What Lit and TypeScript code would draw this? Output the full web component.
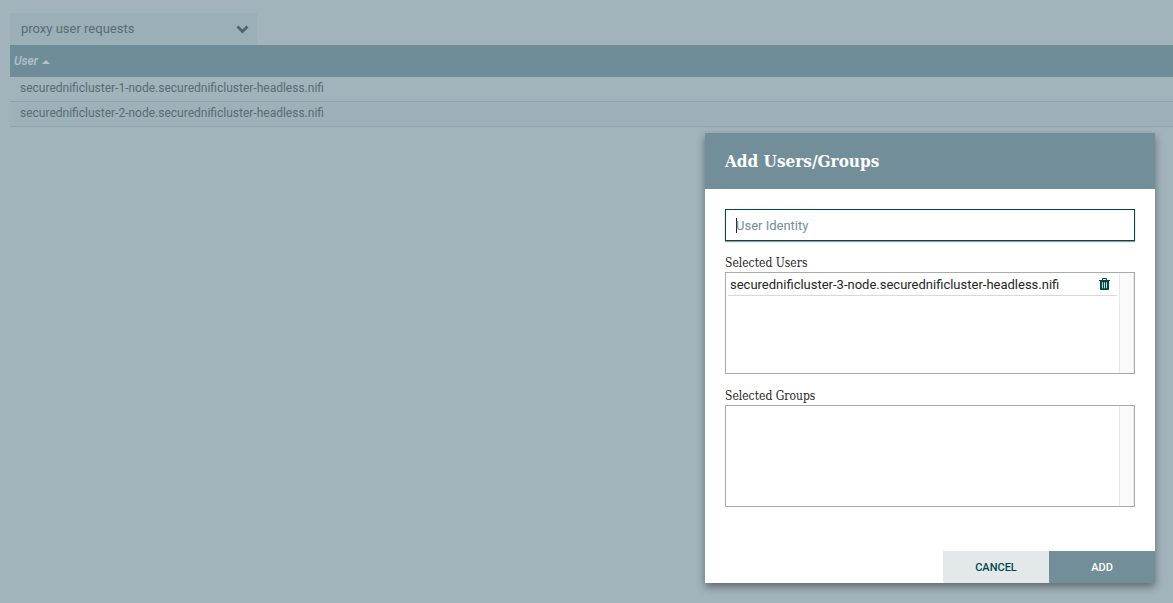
import { LitElement, html, css } from "lit";
import { customElement, state } from "lit/decorators.js";

@customElement("policy-users")
class PolicyUsers extends LitElement {
  static styles = css`
    :host {
      display: block;
      padding: 13px 0 0 10px;
      color: #586c74;
    }
    .picker {
      position: relative;
      width: 247px;
      height: 32px;
      background: #9bafb8;
    }
    .picker-select {
      appearance: none;
      width: 100%;
      height: 100%;
      margin: 0;
      padding: 0 32px 0 11px;
      border: 0;
      border-radius: 0;
      outline: none;
      background: transparent;
      color: inherit;
      font: 13px/32px Roboto, sans-serif;
    }
    .picker-arrow {
      position: absolute;
      top: 12px;
      right: 8px;
      width: 13px;
      height: 9px;
      pointer-events: none;
    }
    .users {
      width: 100%;
      border-collapse: collapse;
      text-align: left;
      font: 12px/24px Roboto, sans-serif;
    }
    .users-head {
      height: 32px;
      padding: 0 4px;
      background: #6f8d98;
      color: #b3c3c9;
      font-weight: 500;
      font-style: italic;
    }
    .sort {
      width: 8px;
      height: 4px;
      margin-left: 1px;
      vertical-align: middle;
    }
    .user {
      height: 24px;
      padding: 0 10px;
      border-bottom: 1px solid #8ba5af;
    }
    .users-row:nth-child(even) {
      background: #9eb1b9;
    }
    .user-name {
      display: block;
      height: 24px;
      line-height: 23px;
    }
  `;

  @state() private users = [
    "securednificluster-1-node.securednificluster-headless.nifi",
    "securednificluster-2-node.securednificluster-headless.nifi",
  ];

  render() {
    return html`
      <div class="picker">
        <select class="picker-select" aria-label="Policy">
          <option>proxy user requests</option>
        </select>
        <svg class="picker-arrow" viewBox="0 0 13 9" aria-hidden="true">
          <path d="M1.5 1.5 6.5 6.5 11.5 1.5" fill="none" stroke="#4e636b" stroke-width="2.8" />
        </svg>
      </div>
      <table class="users">
        <thead>
          <tr>
            <th class="users-head" scope="col">
              User
              <svg class="sort" viewBox="0 0 8 4" aria-hidden="true">
                <path d="M0 4 4 0 8 4Z" fill="#b3c3c9" />
              </svg>
            </th>
          </tr>
        </thead>
        <tbody>
          ${this.users.map(
            (user) => html`<tr class="users-row">
              <td class="user"><span class="user-name">${user}</span></td>
            </tr>`,
          )}
        </tbody>
      </table>
    `;
  }
}

@customElement("selection-list")
class SelectionList extends LitElement {
  static properties = {
    label: { type: String },
    items: { type: Array },
  };

  declare label: string;
  declare items: string[];

  static styles = css`
    :host {
      display: block;
    }
    .label {
      margin: 0;
      color: #262626;
      font: 12px/18px "DejaVu Serif Condensed", "DejaVu Serif", serif;
    }
    .box {
      display: flex;
      box-sizing: border-box;
      height: 102px;
      border: 1px solid #aaa;
    }
    .list {
      flex: 1;
      margin: 0;
      padding: 0 2px;
      list-style: none;
    }
    .track {
      box-sizing: border-box;
      width: 15px;
      border: solid #e8e8e8;
      border-width: 0 1px;
      background: #fafafa;
    }
    .item {
      display: flex;
      align-items: center;
      justify-content: space-between;
      box-sizing: border-box;
      height: 23px;
      padding: 1px 6px 0 2px;
      border-bottom: 1px solid #d6d9db;
      color: #262626;
      font: 13px/22px Roboto, sans-serif;
    }
    .remove {
      display: flex;
      margin: 0;
      padding: 0;
      border: 0;
      background: none;
      color: #004849;
    }
    .trash {
      width: 13px;
      height: 13px;
    }
  `;

  render() {
    return html`
      <h2 class="label" id="label">${this.label}</h2>
      <div class="box">
        <ul class="list" aria-labelledby="label">
          ${this.items.map(
            (item) => html`<li class="item">
              <span>${item}</span>
              <button class="remove" type="button" aria-label="Remove">
                <svg class="trash" viewBox="0 0 13 13" aria-hidden="true">
                  <path
                    fill="currentColor"
                    fill-rule="evenodd"
                    d="M4 2V1Q4 0 5 0H8Q9 0 9 1V2H12V3H11V11.2Q11 12 10.2 12H2.8Q2 12 2 11.2V3H1V2ZM5 2H8V1H5ZM4 4.3V10.3H4.8V4.3ZM6.1 4.3V10.3H6.9V4.3ZM8.2 4.3V10.3H9V4.3Z"
                  />
                </svg>
              </button>
            </li>`,
          )}
        </ul>
        <div class="track"></div>
      </div>
    `;
  }
}

@customElement("add-users-dialog")
class AddUsersDialog extends LitElement {
  static styles = css`
    :host {
      display: flex;
      flex-direction: column;
      background: #fff;
      box-shadow: 0 4px 8px rgba(0, 0, 0, 0.4);
    }
    .header {
      margin: 0;
      padding: 0 20px;
      background: #728e99;
      color: #fff;
      font: bold 17px/56px "DejaVu Serif Condensed", "DejaVu Serif", serif;
    }
    .content {
      display: flex;
      flex: 1;
      flex-direction: column;
      padding: 20px 20px 44px;
    }
    .identity {
      box-sizing: border-box;
      width: 100%;
      height: 32px;
      margin: 0 0 13px;
      padding: 0 10px;
      border: 1px solid #004849;
      border-radius: 0;
      outline: none;
      background: linear-gradient(#262626, #262626) 10px 8px / 1px 15px no-repeat #fff;
      box-shadow: 0 1px 1px #999;
      color: #262626;
      caret-color: transparent;
      font: 13px/30px Roboto, sans-serif;
    }
    .identity::placeholder {
      color: #728e9b;
      opacity: 1;
    }
    .groups {
      margin-top: 13px;
    }
    .actions {
      display: flex;
      justify-content: flex-end;
    }
    .action {
      width: 106px;
      height: 32px;
      margin: 0;
      padding: 1px 0 0;
      border: 0;
      background: #e3e8eb;
      color: #004849;
      font: 500 11px/31px Roboto, sans-serif;
    }
    .primary {
      background: #728e99;
      color: #fff;
    }
  `;

  @state() private users = ["securednificluster-3-node.securednificluster-headless.nifi"];

  render() {
    return html`
      <h1 class="header">Add Users/Groups</h1>
      <div class="content">
        <input class="identity" type="text" placeholder="User Identity" aria-label="User Identity" />
        <selection-list label="Selected Users" .items=${this.users}></selection-list>
        <selection-list class="groups" label="Selected Groups" .items=${[]}></selection-list>
      </div>
      <div class="actions">
        <button class="action" type="button">CANCEL</button>
        <button class="action primary" type="button">ADD</button>
      </div>
    `;
  }
}

@customElement("app-root")
class AppRoot extends LitElement {
  static styles = css`
    :host {
      display: block;
      position: relative;
      min-height: 100vh;
      overflow: hidden;
      background: #a2b3bb;
    }
    .dialog {
      position: absolute;
      right: 18px;
      bottom: 20px;
      width: 450px;
    }
  `;

  render() {
    return html`
      <policy-users></policy-users>
      <add-users-dialog class="dialog" role="dialog" aria-label="Add Users/Groups"></add-users-dialog>
    `;
  }
}
